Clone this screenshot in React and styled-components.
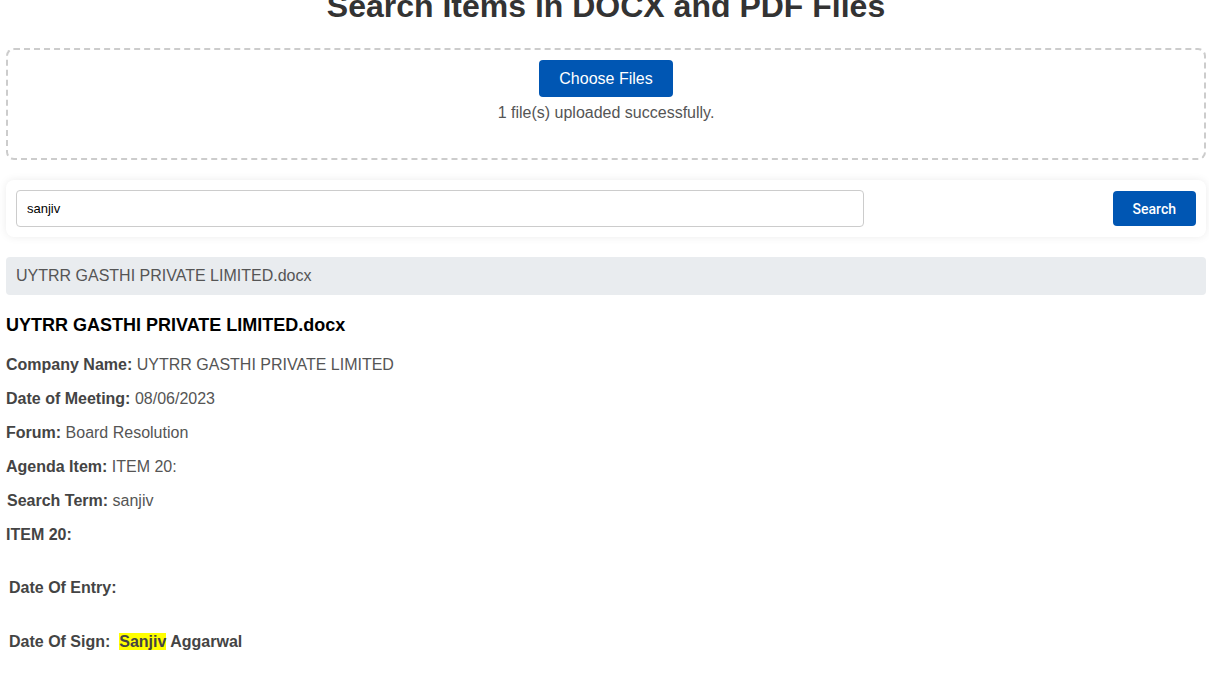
import React from "react";
import styled, { createGlobalStyle } from "styled-components";

const GlobalStyle = createGlobalStyle`
    html, body {
        margin: 0;
        padding: 0;
        background: #ffffff;
        overflow: hidden;
    }
    body {
        font-family: "Liberation Sans", Arial, sans-serif;
        color: #333;
    }
`;

const Page = styled.div`
    width: 1200px;
    padding-left: 6px;
    display: flex;
    flex-direction: column;
`;

const Title = styled.h1`
    margin: -12px 0 23px;
    font-size: 32px;
    line-height: 37px;
    font-weight: 700;
    color: #333;
    text-align: center;
`;

const UploadBox = styled.div`
    height: 112px;
    box-sizing: border-box;
    border: 2px dashed #ccc;
    border-radius: 8px;
    display: flex;
    flex-direction: column;
    align-items: center;
    padding-top: 10px;
`;

const PrimaryButton = styled.button`
    background: #0056b3;
    color: #fff;
    border: none;
    border-radius: 4px;
    font-family: ${(p) => (p.$small ? "Roboto, sans-serif" : '"Liberation Sans", Arial, sans-serif')};
    font-size: ${(p) => (p.$small ? "14px" : "16px")};
    font-weight: ${(p) => (p.$small ? 500 : 400)};
    height: ${(p) => (p.$small ? "35px" : "37px")};
    padding: 0 20px;
    cursor: pointer;
`;

const Status = styled.p`
    margin: 7px 0 0;
    font-size: 16px;
    color: #555;
`;

const SearchCard = styled.div`
    margin-top: 20px;
    height: 57px;
    box-sizing: border-box;
    background: #fff;
    border-radius: 8px;
    box-shadow: 0 0 8px rgba(0, 0, 0, 0.08);
    display: flex;
    align-items: center;
    justify-content: space-between;
    padding: 0 10px;
`;

const SearchInput = styled.input`
    width: 848px;
    height: 37px;
    box-sizing: border-box;
    border: 1px solid #ccc;
    border-radius: 4px;
    padding: 0 10px;
    font-family: "Liberation Sans", Arial, sans-serif;
    font-size: 13px;
    color: #000;
    outline: none;
`;

const FileBar = styled.div`
    margin-top: 20px;
    height: 38px;
    background: #e9ecef;
    border-radius: 4px;
    display: flex;
    align-items: center;
    padding-left: 10px;
    font-size: 16px;
    color: #555;
`;

const Result = styled.div`
    padding-top: 10px;
`;

const DocTitle = styled.h3`
    margin: 10px 0 0;
    font-size: 18px;
    line-height: 21px;
    font-weight: 700;
    color: #000;
`;

const Field = styled.p`
    margin: ${(p) => (p.$gap ? `${p.$gap}px` : "16px")} 0 0;
    padding-left: ${(p) => p.$indent || 0}px;
    font-size: 16px;
    line-height: 18px;
    color: #555;
`;

const Label = styled.strong`
    color: #444;
    font-weight: 700;
`;

const Mark = styled.mark`
    background: #ffff00;
    color: #444;
`;

const fields = [
    ["Company Name:", "UYTRR GASTHI PRIVATE LIMITED"],
    ["Date of Meeting:", "08/06/2023"],
    ["Forum:", "Board Resolution"],
    ["Agenda Item:", "ITEM 20:"],
];

const App = () => {
    return (
        <>
            <GlobalStyle />
            <Page>
                <Title>Search Items in DOCX and PDF Files</Title>

                <UploadBox>
                    <PrimaryButton>Choose Files</PrimaryButton>
                    <Status>1 file(s) uploaded successfully.</Status>
                </UploadBox>

                <SearchCard>
                    <SearchInput defaultValue="sanjiv" />
                    <PrimaryButton $small>Search</PrimaryButton>
                </SearchCard>

                <FileBar>UYTRR GASTHI PRIVATE LIMITED.docx</FileBar>

                <Result>
                    <DocTitle>UYTRR GASTHI PRIVATE LIMITED.docx</DocTitle>
                    {fields.map(([label, value], i) => (
                        <Field key={label} $gap={i === 0 ? 20 : 16}>
                            <Label>{label}</Label> {value}
                        </Field>
                    ))}
                    <Field $indent={1}>
                        <Label>Search Term:</Label> sanjiv
                    </Field>
                    <Field>
                        <Label>ITEM 20:</Label>
                    </Field>
                    <Field $gap={35} $indent={3}>
                        <Label>Date Of Entry:</Label>
                    </Field>
                    <Field $gap={36} $indent={3}>
                        <Label>Date Of Sign:</Label>&nbsp;&nbsp;
                        <Label>
                            <Mark>Sanjiv</Mark> Aggarwal
                        </Label>
                    </Field>
                </Result>
            </Page>
        </>
    );
};

export default App;
